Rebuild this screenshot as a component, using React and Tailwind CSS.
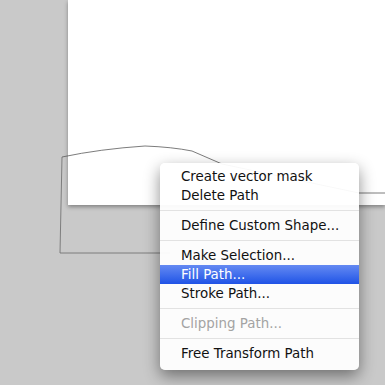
import React from 'react';

const items = [
  { label: 'Create vector mask' },
  { label: 'Delete Path' },
  { sep: true },
  { label: 'Define Custom Shape...' },
  { sep: true },
  { label: 'Make Selection...' },
  { label: 'Fill Path...', active: true },
  { label: 'Stroke Path...' },
  { sep: true },
  { label: 'Clipping Path...', disabled: true },
  { sep: true },
  { label: 'Free Transform Path' },
];

function ContextMenu() {
  return (
    <div className="absolute left-[160px] top-[163px] w-[199px] rounded-[5px] bg-white/95 pt-[4px] pb-[7px] shadow-[0_6px_16px_rgba(0,0,0,0.45)]">
      {items.map((item, i) =>
        item.sep ? (
          <div key={i} className="flex h-[11px] items-center">
            <div className="h-px w-full bg-[#e2e2e2]" />
          </div>
        ) : (
          <div
            key={i}
            className={`flex h-[19px] items-center pl-[21px] pt-px text-[13.4px] leading-none ${
              item.active
                ? 'bg-gradient-to-b from-[#6489f2] to-[#1f52e6] text-white'
                : item.disabled
                ? 'text-[#a3a3a3]'
                : 'text-[#111]'
            }`}
          >
            {item.label}
          </div>
        )
      )}
    </div>
  );
}

export default function App() {
  return (
    <div
      className="relative h-[385px] w-[385px] overflow-hidden bg-[#c9c9c9]"
      style={{ fontFamily: '"DejaVu Sans", "Liberation Sans", sans-serif' }}
    >
      <div className="ml-[68px] h-[205px] bg-white shadow-[0_2px_4px_rgba(0,0,0,0.35)]" />

      <svg className="absolute left-0 top-0" width="385" height="385" viewBox="0 0 385 385">
        <path
          d="M62 157 Q 100 149 145 146 Q 172 147 192 151 L 222 164 L 359 193 L 385 193"
          fill="none"
          stroke="#5a5a5a"
          strokeWidth="0.8"
        />
        <path d="M62 157 L 60 253 L 170 253" fill="none" stroke="#6a6a6a" strokeWidth="0.8" />
      </svg>

      <ContextMenu />
    </div>
  );
}
